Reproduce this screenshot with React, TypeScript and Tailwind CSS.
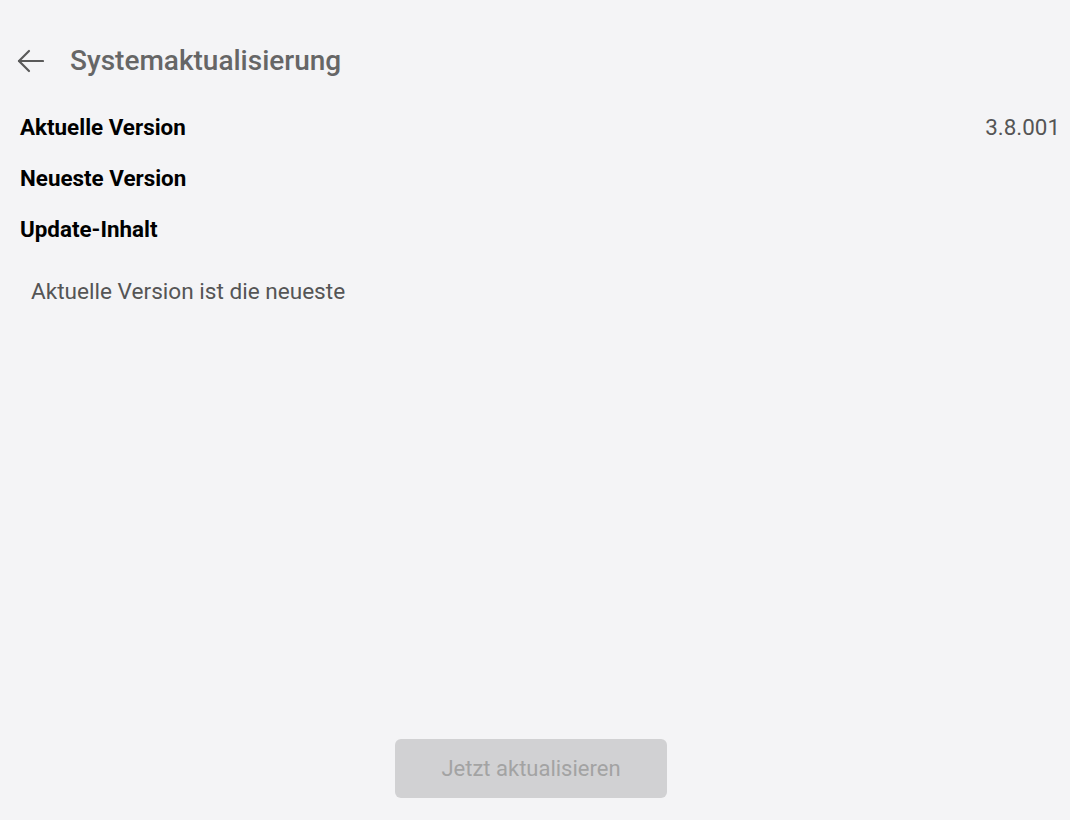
const rows = [
  { label: "Aktuelle Version", value: "3.8.001" },
  { label: "Neueste Version", value: "" },
];

export default function App() {
  return (
    <div
      className="w-[1070px] h-[820px] bg-[#f4f4f6] flex flex-col"
      style={{ fontFamily: "Roboto, 'Liberation Sans', sans-serif" }}
    >
      <div className="flex items-center h-[62px] mt-[30px] pl-[17px]">
        <svg width="27" height="24" viewBox="0 0 27 24" fill="none" stroke="#5a5a5a" strokeWidth="2.2" strokeLinecap="round" strokeLinejoin="round">
          <path d="M2 12H26" />
          <path d="M12 2L2 12L12 22" />
        </svg>
        <span className="ml-[26px] text-[28px] font-medium text-[#666]">Systemaktualisierung</span>
      </div>

      <div className="flex flex-col mt-[10px] pl-[20px] pr-[10px]">
        {rows.map((r) => (
          <div key={r.label} className="flex items-center justify-between h-[51px]">
            <span className="text-[22.4px] font-bold text-black">{r.label}</span>
            <span className="text-[22.4px] text-[#555]">{r.value}</span>
          </div>
        ))}
        <div className="flex items-center h-[51px]">
          <span className="text-[22.4px] font-bold text-black">Update-Inhalt</span>
        </div>
        <p className="mt-[24px] pl-[11px] text-[22.6px] leading-[26px] text-[#555]">Aktuelle Version ist die neueste</p>
      </div>

      <div className="flex-1" />

      <div className="flex justify-center pb-[22px] pr-[8px]">
        <button className="w-[272px] h-[59px] rounded-[6px] bg-[#d1d1d3] text-[22px] text-[#a3a3a3]">
          Jetzt aktualisieren
        </button>
      </div>
    </div>
  );
}
